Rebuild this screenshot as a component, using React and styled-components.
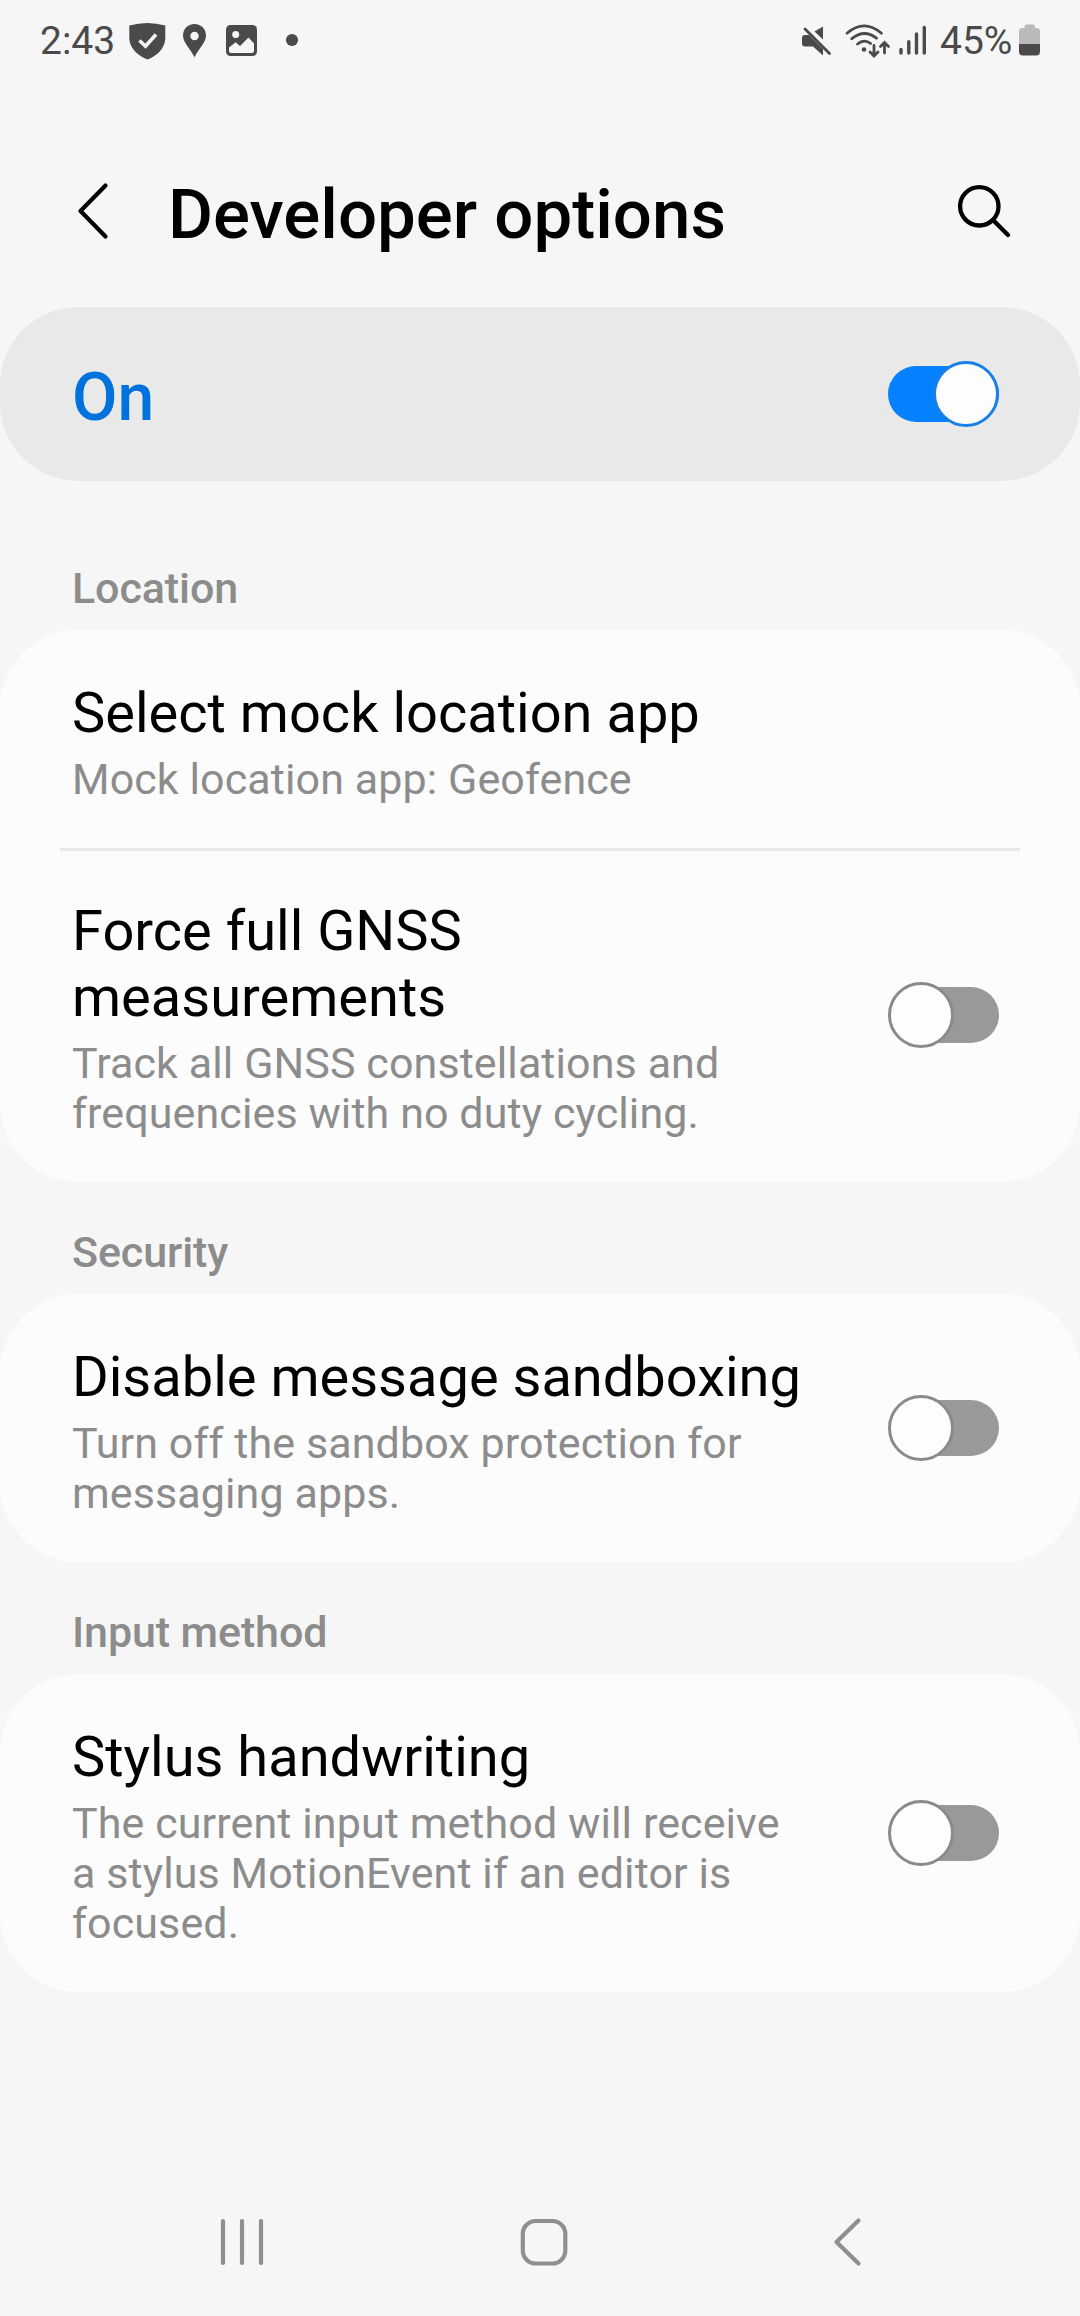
import React from 'react';
import styled, { createGlobalStyle, css } from 'styled-components';

const Global = createGlobalStyle`
  * { box-sizing: border-box; }
  body { margin: 0; background: #f6f6f6; }
`;

const Screen = styled.main`
  width: 1080px;
  height: 2316px;
  display: flex;
  flex-direction: column;
  background: #f6f6f6;
  color: #000;
  font-family: Roboto, "Noto Sans", sans-serif;
  overflow: hidden;
`;

const StatusBar = styled.div`
  height: 82px;
  display: flex;
  justify-content: space-between;
  align-items: flex-start;
  padding: 16px 39px 0 40px;
  color: #4a4a4a;
`;

const StatusGroup = styled.div`
  display: flex;
  height: 50px;
`;

const StatusText = styled.span`
  font-size: 39px;
  line-height: 50px;
  width: ${(p) => p.$w}px;
  padding-left: ${(p) => p.$indent || 0}px;
  white-space: nowrap;
`;

const Glyph = styled.svg`
  display: block;
  flex: none;
  fill: none;
  stroke: none;
`;

const Header = styled.header`
  height: 225px;
  display: flex;
  align-items: center;
  padding: 33px 66px 0 70px;
`;

const Title = styled.h1`
  flex: 1;
  margin: 0 0 0 50px;
  padding-top: 8px;
  font-size: 69px;
  line-height: 80px;
  font-weight: 500;
`;

const IconButton = styled.button`
  border: 0;
  padding: 0;
  background: none;
  display: block;
`;

const MasterSwitch = styled.section`
  height: 174px;
  display: flex;
  align-items: center;
  justify-content: space-between;
  padding: 0 81px 0 72px;
  border-radius: 78px;
  background: #e9e9e9;
`;

const MasterLabel = styled.span`
  padding-top: 8px;
  font-size: 66px;
  line-height: 76px;
  font-weight: 500;
  color: #0072de;
`;

const SectionTitle = styled.h2`
  margin: ${(p) => (p.$first ? 82 : 45)}px 0 0;
  padding: 0 72px;
  height: 67px;
  font-size: 43px;
  line-height: 50px;
  letter-spacing: -0.1px;
  font-weight: 500;
  color: #8c8c8c;
`;

const Card = styled.section`
  border-radius: 78px;
  background: #fcfcfc;
`;

const Divider = styled.hr`
  margin: 0 60px -3px;
  border: 0;
  height: 3px;
  background: #e8e8e8;
`;

const Row = styled.div`
  display: flex;
  align-items: center;
  justify-content: space-between;
  padding: 0 81px 0 72px;
`;

const RowText = styled.div`
  width: 740px;
  padding: 50px 0 44px;
`;

const RowTitle = styled.div`
  font-size: 56px;
  line-height: 66px;
  white-space: pre-line;
`;

const RowSummary = styled.div`
  margin-top: 8px;
  font-size: 43px;
  line-height: 50px;
  letter-spacing: 0.1px;
  color: #8c8c8c;
  white-space: pre-line;
`;

const Track = styled.div`
  flex: none;
  display: flex;
  align-items: center;
  width: 111px;
  height: 56px;
  border-radius: 28px;
  ${(p) =>
    p.$on
      ? css`justify-content: flex-end; background: #0381fe;`
      : css`justify-content: flex-start; background: linear-gradient(90deg, transparent 33px, #999 33px);`}
`;

const Knob = styled.div`
  flex: none;
  width: 66px;
  height: 66px;
  border-radius: 50%;
  border: 3px solid ${(p) => (p.$on ? '#1a7fe6' : '#8a8a8a')};
  background: #fdfdfd;
`;

const NavBar = styled.nav`
  margin-top: auto;
  height: 148px;
  display: flex;
  align-items: center;
  padding: 0 190px 0 212px;
`;

const NavIcon = styled(Glyph)`
  margin-right: ${(p) => p.$gap || 0}px;
`;

const Switch = ({ on }) => (
  <Track $on={on}>
    <Knob $on={on} />
  </Track>
);

const StatusIconsLeft = () => (
  <Glyph width="180" height="50" viewBox="124 16 180 50">
    <path fill="#4a4a4a" d="M129.300 25.500Q147.500 20.500 165.300 25.500V38C165.300 48 157 56 147.500 59.500C138 56 129.300 48 129.300 38Z" />
    <path stroke="#f6f6f6" strokeWidth="3.600" d="M139.500 40.500L145.500 46.200L156 34.500" />
    <path fill="#4a4a4a" fillRule="evenodd" d="M194.500 24C187.800 24 183 29 183 35.500C183 43 190.500 48.500 194.500 57.300C198.500 48.500 206 43 206 35.500C206 29 201.200 24 194.500 24ZM194.500 31.800A4.200 4.200 0 1 1 194.500 40.200A4.200 4.200 0 1 1 194.500 31.800Z" />
    <rect x="226" y="25" width="31" height="31" rx="4.500" fill="#4a4a4a" />
    <circle cx="235.700" cy="34.500" r="3.500" fill="#f6f6f6" />
    <path fill="#f6f6f6" d="M229 47.500L235.700 42.200L240 46L248.500 37.500L254 43.500V51Q254 53 252 53H231Q229 53 229 51Z" />
    <circle cx="292" cy="40" r="6.100" fill="#4a4a4a" />
  </Glyph>
);

const StatusIconsRight = () => (
  <Glyph width="141" height="50" viewBox="798 16 141 50">
    <path fill="#4a4a4a" d="M823 26.500V39.500L814.500 31.500ZM805 35H809L823 49V55.500L813 46.500H805Q802 46.500 802 43.500V38Q802 35 805 35Z" />
    <path stroke="#4a4a4a" strokeWidth="2.800" strokeLinecap="round" d="M805 29L829.500 53.500" />
    <g stroke="#4a4a4a" strokeWidth="2.800" strokeLinecap="round">
      <path d="M847 33.200Q864 18.500 881.500 33.200" />
      <path d="M851.700 38.800Q864 28.500 876.500 38.200" />
      <path d="M857.500 44Q864 38.500 870.700 43.500" />
      <path d="M874 45.500V55.500M870 52L874 56L878 52M884.500 53V43M880.500 46.500L884.500 42.500L888.500 46.500" />
      <path strokeWidth="3.400" d="M901 49.500V53M908.800 41.800V53M916.500 34V53M924.300 27.500V53" />
    </g>
    <circle cx="864" cy="49.500" r="2.300" fill="#4a4a4a" />
  </Glyph>
);

const Battery = () => (
  <Glyph width="22" height="50" viewBox="1019 16 22 50">
    <path fill="#bababa" d="M1024.500 28V26.500Q1024.500 24.500 1026.500 24.500H1033Q1035 24.500 1035 26.500V28H1036.500Q1040 28 1040 31.500V44H1019V31.500Q1019 28 1022.500 28Z" />
    <path fill="#4a4a4a" d="M1019 44H1040V51.500Q1040 55.500 1036 55.500H1023Q1019 55.500 1019 51.500Z" />
  </Glyph>
);

const sections = [
  {
    name: 'Location',
    rows: [
      { title: 'Select mock location app', summary: 'Mock location app: Geofence' },
      {
        title: 'Force full GNSS\nmeasurements',
        summary: 'Track all GNSS constellations and\nfrequencies with no duty cycling.',
        toggle: true,
      },
    ],
  },
  {
    name: 'Security',
    rows: [
      {
        title: 'Disable message sandboxing',
        summary: 'Turn off the sandbox protection for\nmessaging apps.',
        toggle: true,
      },
    ],
  },
  {
    name: 'Input method',
    rows: [
      {
        title: 'Stylus handwriting',
        summary: 'The current input method will receive\na stylus MotionEvent if an editor is\nfocused.',
        toggle: true,
      },
    ],
  },
];

export default function App() {
  return (
    <Screen>
      <Global />
      <StatusBar>
        <StatusGroup>
          <StatusText $w={84}>2:43</StatusText>
          <StatusIconsLeft />
        </StatusGroup>
        <StatusGroup>
          <StatusIconsRight />
          <StatusText $w={80} $indent={1}>45%</StatusText>
          <Battery />
        </StatusGroup>
      </StatusBar>
      <Header>
        <IconButton aria-label="Back">
          <Glyph width="48" height="80" viewBox="70 171 48 80">
            <path stroke="#000" strokeWidth="4.200" strokeLinecap="round" strokeLinejoin="round" d="M105.500 185.500L80.500 211L105.500 236.500" />
          </Glyph>
        </IconButton>
        <Title>Developer options</Title>
        <IconButton aria-label="Search">
          <Glyph width="64" height="80" viewBox="950 171 64 80">
            <circle cx="979.300" cy="206.300" r="19.200" stroke="#000" strokeWidth="4.300" />
            <path stroke="#000" strokeWidth="4.300" strokeLinecap="round" d="M993 220L1008 235" />
          </Glyph>
        </IconButton>
      </Header>
      <MasterSwitch>
        <MasterLabel>On</MasterLabel>
        <Switch on />
      </MasterSwitch>
      {sections.map((s, i) => (
        <React.Fragment key={s.name}>
          <SectionTitle $first={i === 0}>{s.name}</SectionTitle>
          <Card>
            {s.rows.map((r, j) => (
              <React.Fragment key={r.title}>
                {j > 0 && <Divider />}
                <Row>
                  <RowText>
                    <RowTitle>{r.title}</RowTitle>
                    <RowSummary>{r.summary}</RowSummary>
                  </RowText>
                  {r.toggle && <Switch />}
                </Row>
              </React.Fragment>
            ))}
          </Card>
        </React.Fragment>
      ))}
      <NavBar>
        <NavIcon $gap={242} width="60" height="60" viewBox="212 2212 60 60">
          <path stroke="#8f8f8f" strokeWidth="4.200" strokeLinecap="round" d="M223 2221V2263M242 2221V2263M261 2221V2263" />
        </NavIcon>
        <NavIcon $gap={256} width="60" height="60" viewBox="514 2212 60 60">
          <rect x="522.800" y="2221" width="42.500" height="42.500" rx="13" stroke="#8f8f8f" strokeWidth="4.200" />
        </NavIcon>
        <NavIcon width="60" height="60" viewBox="830 2212 60 60">
          <path stroke="#8f8f8f" strokeWidth="4.200" strokeLinecap="round" strokeLinejoin="round" d="M858.500 2220.500L836.500 2242L858.500 2263.500" />
        </NavIcon>
      </NavBar>
    </Screen>
  );
}
